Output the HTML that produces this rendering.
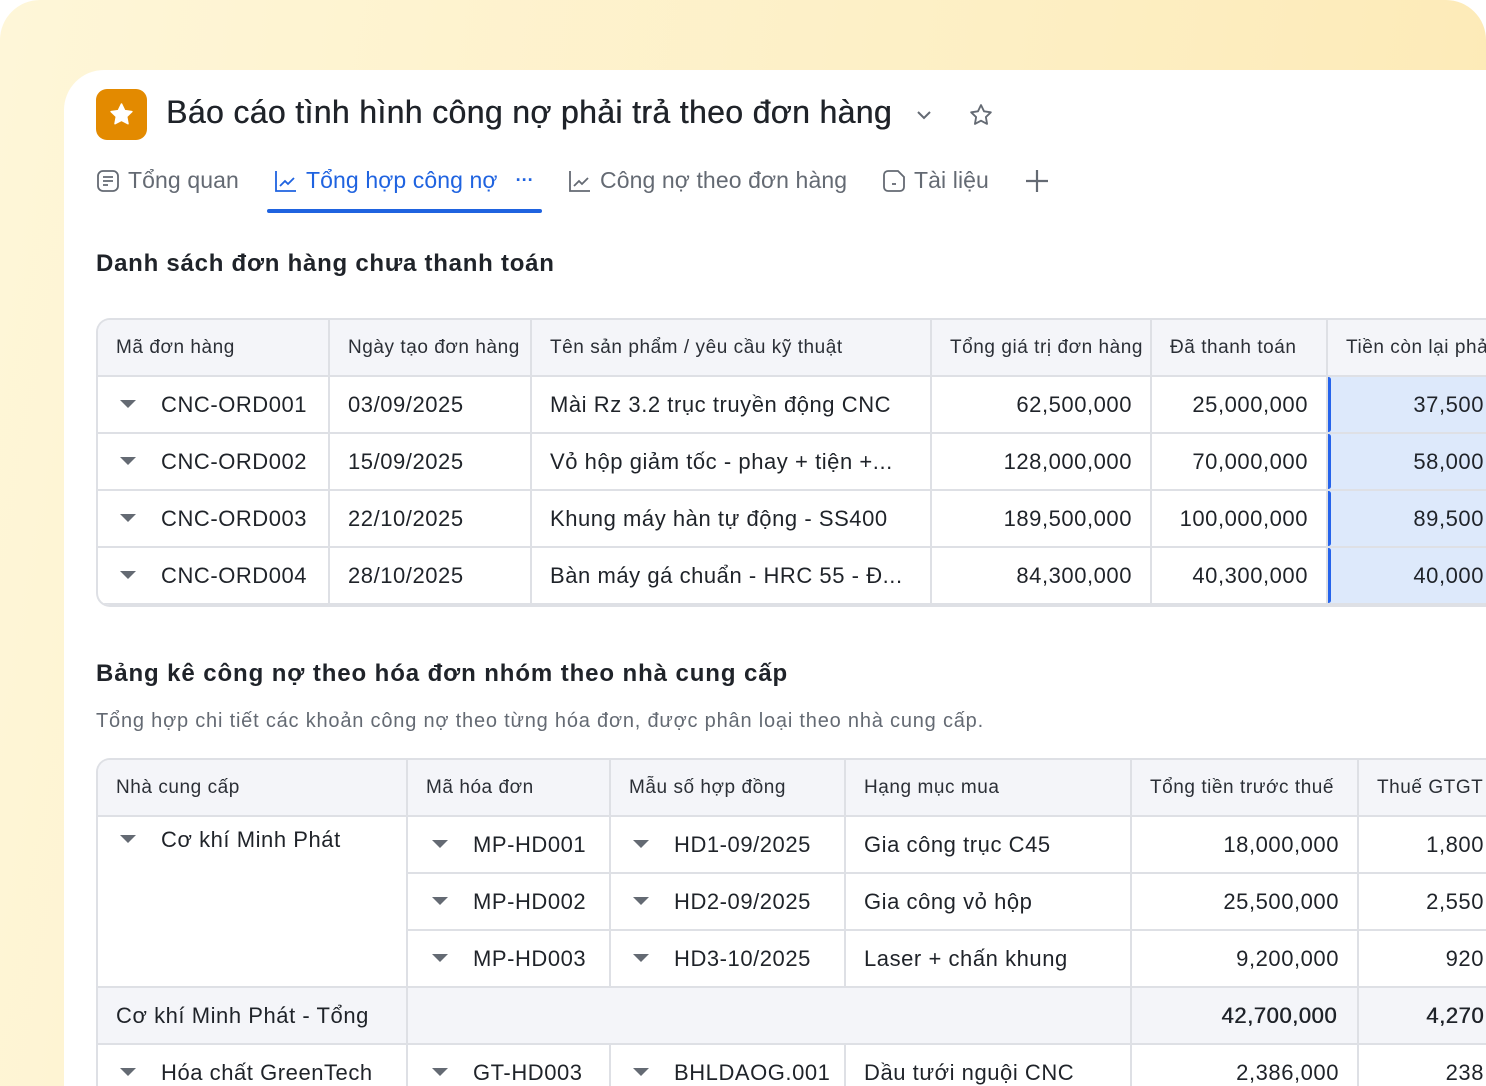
<!DOCTYPE html>
<html><head><meta charset="utf-8"><style>
*{box-sizing:border-box;margin:0;padding:0}
html,body{width:1486px;height:1086px;overflow:hidden;background:#fff;font-family:"Liberation Sans","Noto Sans CJK SC",sans-serif;color:#1f2329}
.bg{position:absolute;left:0;top:0;width:1486px;height:1086px;border-radius:40px 40px 0 0;background:linear-gradient(100deg,#fef6d8 0%,#fdefc4 60%,#fde9b4 100%)}
.card{position:absolute;left:64px;top:70px;width:1422px;height:1016px;background:#fff;border-radius:40px 0 0 0;overflow:hidden}
.abs{position:absolute;white-space:nowrap}
.logo{left:32px;top:19px;width:51px;height:51px;border-radius:11px;background:#e38a00}
.title{left:102px;top:24px;font-size:32px;color:#1f2329;letter-spacing:0.35px;text-shadow:0.4px 0 0 #1f2329}
.tab{top:97px;font-size:23px;color:#646a73;display:flex;align-items:center;gap:8px;letter-spacing:0.1px}
.tab.act{color:#1f63e0}
.h2{font-size:24px;font-weight:bold;color:#1f2329;letter-spacing:0.75px}
.tw{position:absolute;border:2px solid #dee0e5;border-right:none;border-radius:14px 0 0 14px;overflow:hidden}
table{border-collapse:collapse;table-layout:fixed;font-size:22px;color:#1f2329;letter-spacing:0.55px}
td,th{border:2px solid #dee0e5;white-space:nowrap;overflow:hidden;padding:0 18px;text-align:left;font-weight:normal}
th{background:#f4f5f9;font-size:19px;color:#2b2f36;height:56px;letter-spacing:0.55px}
tr td:first-child,tr th:first-child{border-left:none}
tr:first-child th{border-top:none}
td{height:57px}
.r{text-align:right}
.tri{display:inline-block;width:0;height:0;border-left:8px solid transparent;border-right:8px solid transparent;border-top:8px solid #646a73;margin:0 25px 4px 4px;vertical-align:middle}
.hl{background:#dde9fb;position:relative}
.hl:before{content:"";position:absolute;left:-2px;top:0;bottom:0;width:5px;background:#2563eb;border-radius:3px}
.sub td{background:#f4f5f9}
.b{text-shadow:0.5px 0 0 #1f2329}
</style></head><body>
<div class="bg"></div>
<div class="card">
  <div class="abs logo"><svg width="51" height="51" viewBox="0 0 51 51"><path d="M25.5 15l3.2 6.6 7.2 1-5.2 5 1.3 7.1-6.5-3.4-6.5 3.4 1.3-7.1-5.2-5 7.2-1z" fill="#fff" stroke="#fff" stroke-width="1.5" stroke-linejoin="round"/></svg></div>
  <div class="abs title">Báo cáo tình hình công nợ phải trả theo đơn hàng</div>
  <svg class="abs" style="left:851px;top:38px" width="18" height="14" viewBox="0 0 18 14"><path d="M3 4l6 6 6-6" fill="none" stroke="#646a73" stroke-width="2"/></svg>
  <svg class="abs" style="left:904px;top:32px" width="26" height="26" viewBox="0 0 24 24"><path d="M12 2.8l2.8 5.8 6.3.9-4.6 4.4 1.1 6.3L12 17.2l-5.6 3 1.1-6.3-4.6-4.4 6.3-.9z" fill="none" stroke="#646a73" stroke-width="1.7" stroke-linejoin="round"/></svg>

  <div class="abs tab" style="left:32px"><svg width="24" height="24" viewBox="0 0 24 24"><rect x="2" y="2" width="20" height="20" rx="5" fill="none" stroke="#646a73" stroke-width="1.8"/><path d="M7 8h10M7 12h10M7 16h5" stroke="#646a73" stroke-width="1.8"/></svg>Tổng quan</div>
  <div class="abs tab act" style="left:210px"><svg width="24" height="24" viewBox="0 0 24 24"><path d="M2 2v20h20" fill="none" stroke="#1f63e0" stroke-width="1.8"/><path d="M6 17l5-5 3 3 6-6" fill="none" stroke="#1f63e0" stroke-width="1.8"/></svg>Tổng hợp công nợ<span style="margin-left:10px;font-weight:bold;font-size:18px;letter-spacing:0">···</span></div>
  <div class="abs" style="left:203px;top:139px;width:275px;height:4px;background:#1f63e0;border-radius:2px"></div>
  <div class="abs tab" style="left:504px"><svg width="24" height="24" viewBox="0 0 24 24"><path d="M2 2v20h20" fill="none" stroke="#646a73" stroke-width="1.8"/><path d="M6 17l5-5 3 3 6-6" fill="none" stroke="#646a73" stroke-width="1.8"/></svg>Công nợ theo đơn hàng</div>
  <div class="abs tab" style="left:818px"><svg width="24" height="24" viewBox="0 0 24 24"><path d="M6 2h10l6 6v10a4 4 0 0 1-4 4H6a4 4 0 0 1-4-4V6a4 4 0 0 1 4-4z" fill="none" stroke="#646a73" stroke-width="1.8"/><path d="M10 15h4" stroke="#646a73" stroke-width="1.8"/></svg>Tài liệu</div>
  <svg class="abs" style="left:960px;top:98px" width="26" height="26" viewBox="0 0 26 26"><path d="M13 2v22M2 13h22" stroke="#646a73" stroke-width="2.2"/></svg>

  <div class="abs h2" style="left:32px;top:180px">Danh sách đơn hàng chưa thanh toán</div>

  <div class="tw" style="left:32px;top:248px;width:1400px">
  <table style="width:1450px">
   <colgroup><col style="width:231px"><col style="width:202px"><col style="width:400px"><col style="width:220px"><col style="width:176px"><col style="width:221px"></colgroup>
   <tr><th>Mã đơn hàng</th><th>Ngày tạo đơn hàng</th><th>Tên sản phẩm / yêu cầu kỹ thuật</th><th class="r">Tổng giá trị đơn hàng</th><th>Đã thanh toán</th><th>Tiền còn lại phải trả</th></tr>
   <tr><td><span class="tri"></span>CNC-ORD001</td><td>03/09/2025</td><td>Mài Rz 3.2 trục truyền động CNC</td><td class="r">62,500,000</td><td class="r">25,000,000</td><td class="r hl">37,500,000</td></tr>
   <tr><td><span class="tri"></span>CNC-ORD002</td><td>15/09/2025</td><td>Vỏ hộp giảm tốc - phay + tiện +...</td><td class="r">128,000,000</td><td class="r">70,000,000</td><td class="r hl">58,000,000</td></tr>
   <tr><td><span class="tri"></span>CNC-ORD003</td><td>22/10/2025</td><td>Khung máy hàn tự động - SS400</td><td class="r">189,500,000</td><td class="r">100,000,000</td><td class="r hl">89,500,000</td></tr>
   <tr><td><span class="tri"></span>CNC-ORD004</td><td>28/10/2025</td><td>Bàn máy gá chuẩn - HRC 55 - Đ...</td><td class="r">84,300,000</td><td class="r">40,300,000</td><td class="r hl">40,000,000</td></tr>
  </table></div>

  <div class="abs h2" style="left:32px;top:590px;letter-spacing:0.9px">Bảng kê công nợ theo hóa đơn nhóm theo nhà cung cấp</div>
  <div class="abs" style="left:32px;top:640px;font-size:20px;color:#646a73;letter-spacing:0.8px">Tổng hợp chi tiết các khoản công nợ theo từng hóa đơn, được phân loại theo nhà cung cấp.</div>

  <div class="tw" style="left:32px;top:688px;width:1400px;border-bottom:none;border-radius:14px 0 0 0">
  <table style="width:1450px">
   <colgroup><col style="width:309px"><col style="width:203px"><col style="width:235px"><col style="width:286px"><col style="width:227px"><col style="width:190px"></colgroup>
   <tr><th>Nhà cung cấp</th><th>Mã hóa đơn</th><th>Mẫu số hợp đồng</th><th>Hạng mục mua</th><th>Tổng tiền trước thuế</th><th>Thuế GTGT</th></tr>
   <tr><td rowspan="3" style="vertical-align:top;padding-top:10px"><span class="tri"></span>Cơ khí Minh Phát</td><td><span class="tri" style="margin-left:6px"></span>MP-HD001</td><td><span class="tri"></span>HD1-09/2025</td><td>Gia công trục C45</td><td class="r">18,000,000</td><td class="r">1,800,000</td></tr>
   <tr><td><span class="tri" style="margin-left:6px"></span>MP-HD002</td><td><span class="tri"></span>HD2-09/2025</td><td>Gia công vỏ hộp</td><td class="r">25,500,000</td><td class="r">2,550,000</td></tr>
   <tr><td><span class="tri" style="margin-left:6px"></span>MP-HD003</td><td><span class="tri"></span>HD3-10/2025</td><td>Laser + chấn khung</td><td class="r">9,200,000</td><td class="r">920,000</td></tr>
   <tr class="sub"><td>Cơ khí Minh Phát - Tổng</td><td colspan="3"></td><td class="r b" style="padding-right:20px">42,700,000</td><td class="r b">4,270,000</td></tr>
   <tr><td><span class="tri"></span>Hóa chất GreenTech</td><td><span class="tri" style="margin-left:6px"></span>GT-HD003</td><td><span class="tri"></span>BHLDAOG.001</td><td>Dầu tưới nguội CNC</td><td class="r">2,386,000</td><td class="r">238,600</td></tr>
  </table></div>
</div>
</body></html>
